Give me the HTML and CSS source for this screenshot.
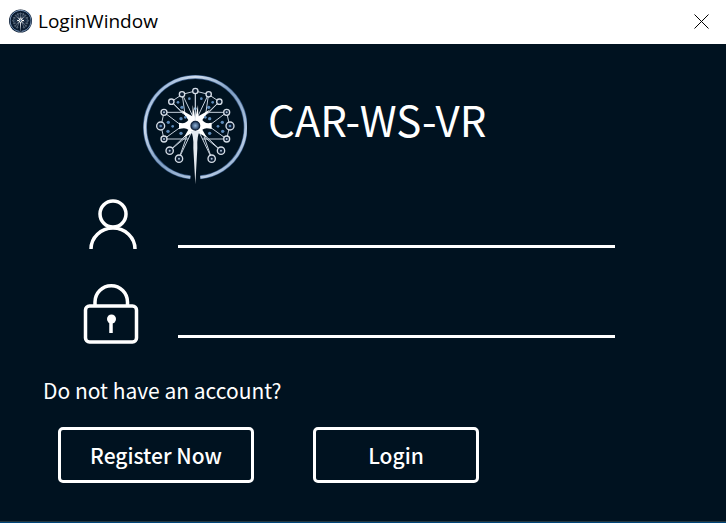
FILE: index.html
```
<!DOCTYPE html>
<html lang="en">
<head>
<meta charset="utf-8">
<meta name="viewport" content="width=device-width, initial-scale=1">
<title>LoginWindow</title>
<link rel="stylesheet" href="styles.css">
</head>
<body>
<svg class="defs" aria-hidden="true">
  <defs>
    <linearGradient id="ring" x1="0" y1="0" x2="1" y2="1">
      <stop offset="0" stop-color="#6f95c4"/>
      <stop offset=".25" stop-color="#cfdcee"/>
      <stop offset=".5" stop-color="#7f9dc2"/>
      <stop offset=".8" stop-color="#b9cce4"/>
      <stop offset="1" stop-color="#6c8fba"/>
    </linearGradient>
    <radialGradient id="core">
      <stop offset="0" stop-color="#8fb3da"/>
      <stop offset="1" stop-color="#1c3556"/>
    </radialGradient>
    <g id="half">
      <path d="M181 78V178M181 170L142 88M176 174L109 110M142 92L150 148M109 110L146 148M87 142H150M87 142L140 182M87 222L140 184M87 222H160M87 142L78 183L87 222M168 196L104 257M172 196L132 280M155 215L132 280M104 257L155 215M109 110L142 88L181 78" fill="none" stroke="#c5cfdb" stroke-width="3"/>
      <path d="M181 160L173 120L172 154L138 134L160 165Q152 178 132 173V192Q152 186 160 194L146 218L172 203H181Z" fill="#fff"/>
      <g fill="#0b1d33" stroke="#d5dde6" stroke-width="4">
        <circle cx="109" cy="110" r="8"/><circle cx="141" cy="88" r="8"/>
        <circle cx="87" cy="142" r="9"/><circle cx="77" cy="183" r="12"/>
        <circle cx="87" cy="222" r="9"/><circle cx="104" cy="257" r="11"/>
        <circle cx="132" cy="281" r="11"/>
      </g>
      <g fill="#5e8bb9">
        <circle cx="129" cy="112" r="4"/><circle cx="163" cy="101" r="4"/>
        <circle cx="141" cy="127" r="5"/><circle cx="138" cy="161" r="5"/>
        <circle cx="151" cy="157" r="4"/><circle cx="100" cy="172" r="5"/>
        <circle cx="113" cy="184" r="4"/><circle cx="99" cy="199" r="5"/>
        <circle cx="138" cy="205" r="5"/><circle cx="77" cy="183" r="4"/>
      </g>
      <g fill="#a9bdd3">
        <circle cx="104" cy="257" r="3"/><circle cx="132" cy="281" r="3"/>
        <circle cx="87" cy="142" r="3"/><circle cx="87" cy="222" r="3"/>
      </g>
    </g>
    <symbol id="logo" viewBox="24 30 312 330">
      <path d="M166 337A151 151 0 1 1 196 337" fill="none" stroke="#3a5d88" stroke-width="12"/>
      <path d="M166 337A151 151 0 1 1 196 337" fill="none" stroke="url(#ring)" stroke-width="8"/>
      <use href="#half"/>
      <use href="#half" transform="matrix(-1 0 0 1 362 0)"/>
      <circle cx="181" cy="78" r="8" fill="#0b1d33" stroke="#d5dde6" stroke-width="4"/>
      <circle cx="181" cy="131" r="4" fill="#a9cbe8"/>
      <path d="M166 198Q177 210 175 250L181 358L187 250Q185 210 196 198Z" fill="#e4e9ef"/>
      <circle cx="181" cy="182" r="13" fill="url(#core)" stroke="#10233c" stroke-width="4"/>
    </symbol>
  </defs>
</svg>
<div class="window">
  <header class="titlebar">
    <svg class="app-icon" viewBox="0 0 24 25" aria-hidden="true">
      <circle cx="12" cy="12" r="11.5" fill="#0b1b30"/>
      <use href="#logo" x="1" y="1" width="22" height="23"/>
    </svg>
    <span class="caption">LoginWindow</span>
    <button class="close" type="button" aria-label="Close">
      <svg viewBox="0 0 15 15" aria-hidden="true"><path d="M.5 .5l14 14M14.5 .5l-14 14"/></svg>
    </button>
  </header>
  <main class="content">
    <div class="brand">
      <svg class="logo" aria-hidden="true"><use href="#logo"/></svg>
      <h1>CAR-WS-VR</h1>
    </div>
    <form>
      <div class="field">
        <label for="user" aria-label="User name">
          <svg class="icon" viewBox="0 0 56 62" aria-hidden="true">
            <circle cx="30" cy="22" r="13"/><path d="M8 57A22 21 0 0 1 52 57"/>
          </svg>
        </label>
        <input id="user" type="text" autocomplete="username">
      </div>
      <div class="field">
        <label for="password" aria-label="Password">
          <svg class="icon" viewBox="0 0 56 62" aria-hidden="true">
            <rect x="2.500" y="24" width="51" height="36" rx="4"/>
            <path d="M12 24V20A16.250 16.250 0 0 1 44.500 20V24"/>
            <circle class="solid" cx="28.500" cy="37" r="4.500"/><path d="M28 37V51"/>
          </svg>
        </label>
        <input id="password" type="password" autocomplete="current-password">
      </div>
      <p>Do not have an account?</p>
      <div class="actions">
        <button class="action register" type="button">Register Now</button>
        <button class="action login" type="submit">Login</button>
      </div>
    </form>
  </main>
</div>
</body>
</html>
```
FILE: styles.css
```
* {
  box-sizing: border-box;
}

body {
  margin: 0;
  background: #001220;
  color: #fff;
  font-family: "Noto Sans CJK SC", "Noto Sans", sans-serif;
}

.defs {
  position: absolute;
  width: 0;
  height: 0;
}

.window {
  display: flex;
  flex-direction: column;
  min-height: 100vh;
  border-bottom: 1px solid #004478;
}

.titlebar {
  display: flex;
  align-items: center;
  height: 44px;
  padding: 0 9px 2px 8px;
  background: #fff;
  color: #000;
}

.app-icon {
  width: 25px;
  height: 25px;
}

.caption {
  margin-left: 5px;
  font: 19px/24px "Open Sans", "Noto Sans", sans-serif;
}

.close {
  display: flex;
  margin-left: auto;
  padding: 8px;
  border: 0;
  background: none;
}

.close svg {
  width: 15px;
  height: 15px;
  fill: none;
  stroke: #000;
}

.content {
  flex: 1;
  padding: 31px 40px 36px;
  border-bottom: 1px solid #24383f;
}

.brand {
  display: flex;
  gap: 21px;
  margin-left: 103px;
}

.logo {
  width: 104px;
  height: 110px;
}

h1 {
  margin: 14px 0 0;
  font-size: 42px;
  line-height: 60px;
  font-weight: 400;
}

.field {
  display: flex;
  align-items: flex-start;
  gap: 39px;
  margin: 0 71px 0 43px;
  padding-top: 7px;
  height: 90px;
}

label {
  display: flex;
}

.icon {
  width: 56px;
  height: 62px;
  fill: none;
  stroke: #fff;
  stroke-width: 3.5;
}

.icon .solid {
  fill: #fff;
  stroke: none;
}

input {
  flex: 1;
  min-width: 0;
  height: 56px;
  padding: 0 4px;
  border: 0;
  border-bottom: 3px solid #fff;
  background: none;
  color: #fff;
  font: inherit;
  font-size: 21px;
  outline: none;
}

p {
  margin: 9px 3px 20px;
  font-size: 21px;
  line-height: 33px;
}

.actions {
  display: flex;
  gap: 59px;
  margin-left: 18px;
}

.action {
  height: 56px;
  padding: 0;
  border: 3px solid #fff;
  border-radius: 5px;
  background: none;
  color: #fff;
  font: inherit;
  font-size: 21px;
  font-weight: 500;
}

.register {
  width: 196px;
}

.login {
  width: 166px;
}
```
